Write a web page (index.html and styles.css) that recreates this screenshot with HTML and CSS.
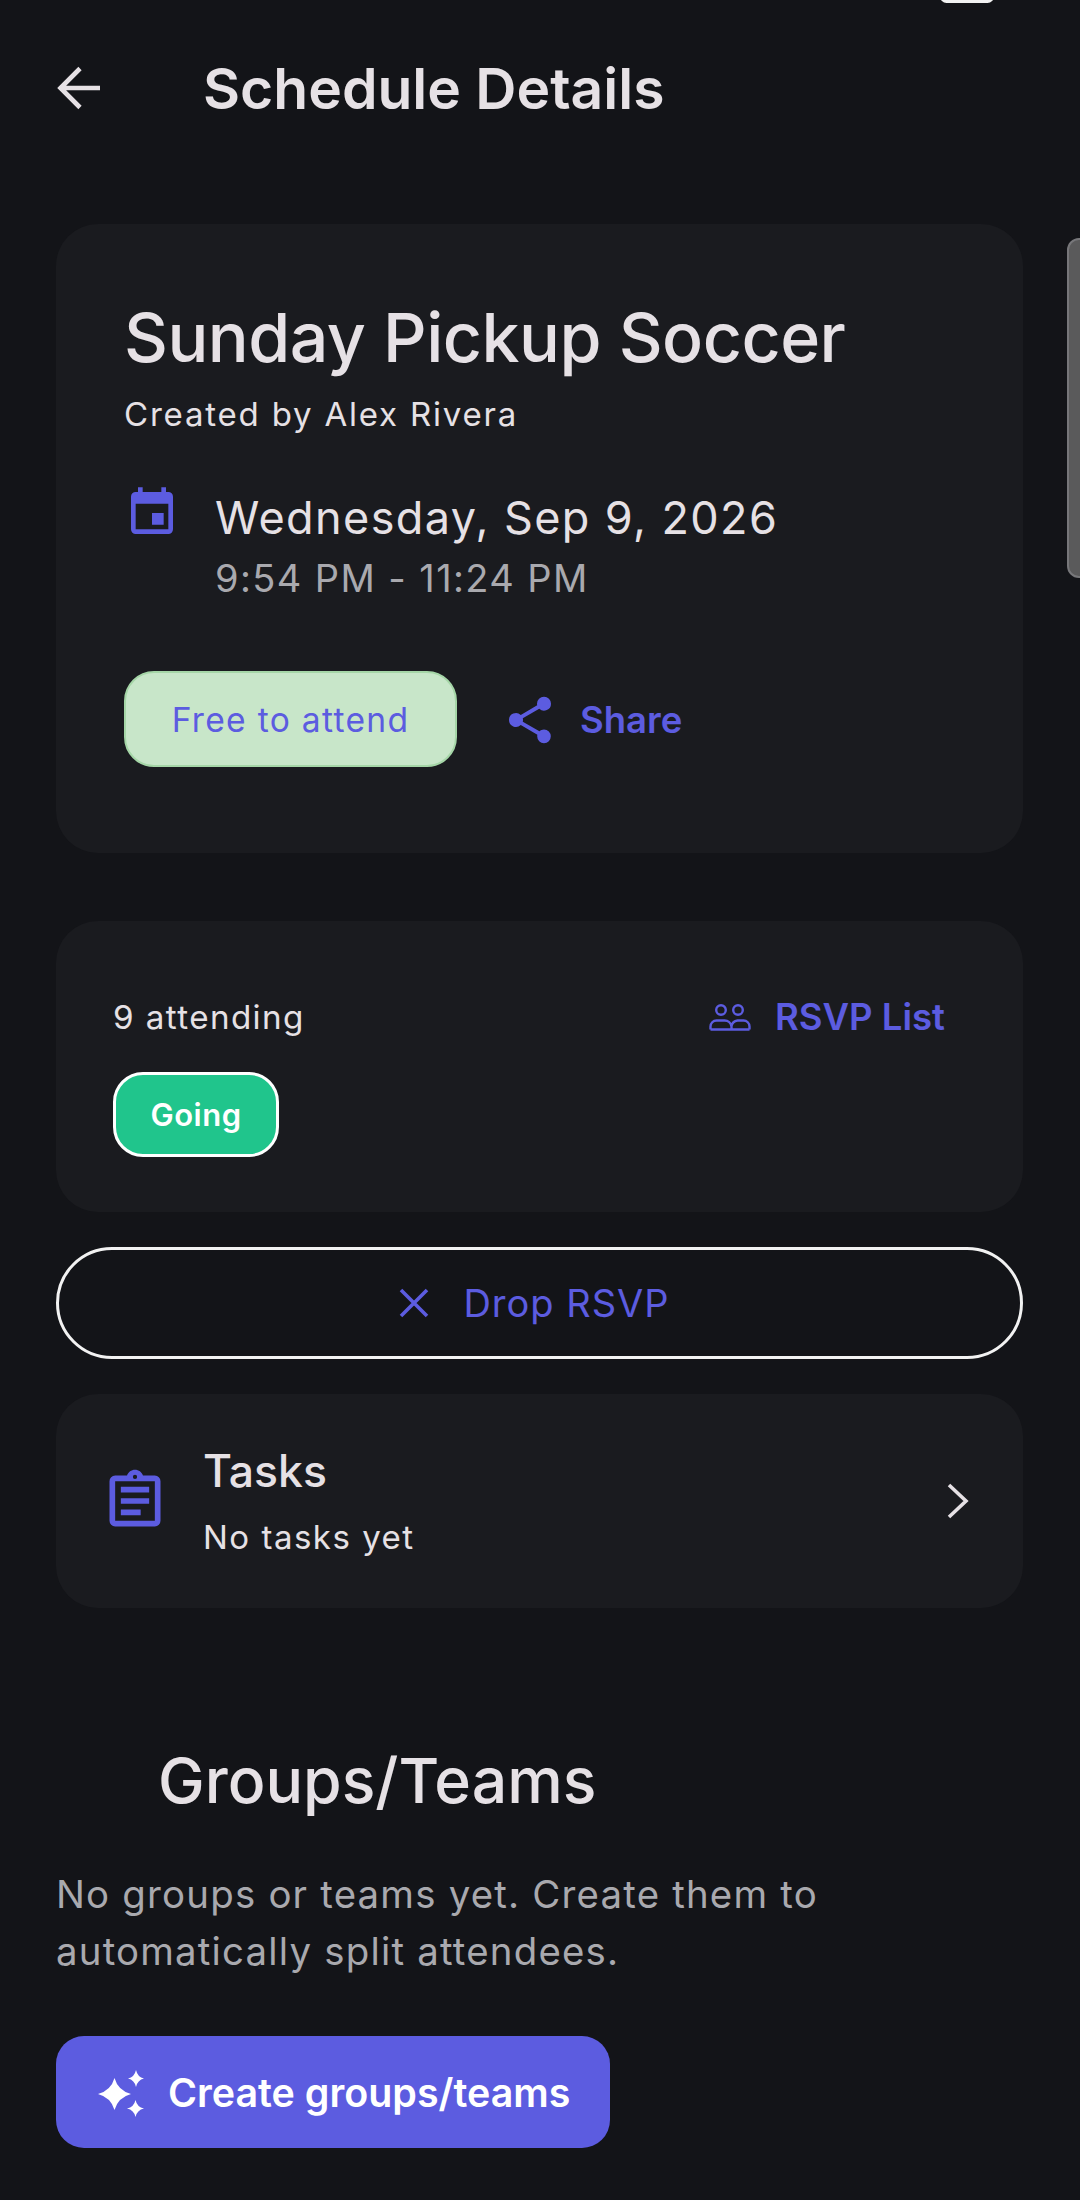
FILE: index.html
```html
<!doctype html>
<html>
<head>
<meta charset="utf-8">
<title>Schedule Details</title>
<link rel="stylesheet" href="styles.css">
</head>
<body>
<div class="status-pill"></div>
<div class="scrollbar"></div>

<div class="page">
	<div class="topbar">
		<svg class="back-icon" viewBox="0 0 48 48"><path d="M44 24H6M24 4.500 4.500 24 24 43.500" fill="none" stroke="#e6e1e5" stroke-width="4.6"/></svg>
		<h1 class="topbar-title">Schedule Details</h1>
	</div>

	<div class="card event-card">
		<h2 class="event-title">Sunday Pickup Soccer</h2>
		<div class="event-author">Created by Alex Rivera</div>
		<div class="event-when">
			<svg class="calendar-icon" viewBox="0 0 24 24"><path d="M19 3h-1V1h-2v2H8V1H6v2H5a2 2 0 0 0-2 2v14a2 2 0 0 0 2 2h14a2 2 0 0 0 2-2V5a2 2 0 0 0-2-2zm0 16H5V8h14v11zm-7-7h5v5h-5v-5z" fill="#5c5ce0"/></svg>
			<div>
				<div class="event-date">Wednesday, Sep 9, 2026</div>
				<div class="event-time">9:54 PM - 11:24 PM</div>
			</div>
		</div>
		<div class="event-actions">
			<div class="free-chip">Free to attend</div>
			<div class="share">
				<svg class="share-icon" viewBox="0 0 24 24"><path d="M18 16.080c-.76 0-1.44.3-1.96.77L8.910 12.700c.05-.23.09-.46.09-.7s-.04-.47-.09-.7l7.050-4.110A2.990 2.990 0 0 0 21 5a3 3 0 0 0-6 0c0 .24.04.47.09.7L8.040 9.810A2.990 2.990 0 0 0 3 12a2.990 2.990 0 0 0 5.040 2.190l7.120 4.160c-.05.21-.08.43-.08.65a2.920 2.920 0 1 0 2.920-2.920z" fill="#5c5ce0"/></svg>
				<span>Share</span>
			</div>
		</div>
	</div>

	<div class="card rsvp-card">
		<div class="rsvp-row">
			<span class="attending">9 attending</span>
			<div class="rsvp-link">
				<svg class="people-icon" viewBox="0 0 42 27"><g fill="none" stroke="#5c5ce0" stroke-width="2.4"><circle cx="12" cy="6" r="4.800"/><circle cx="29" cy="6" r="4.800"/><path d="M1.500 25.500v-3a6 6 0 0 1 6-6h8a7 7 0 0 1 7 6v3M22.500 22a7 7 0 0 1 6-5.500h6a6 6 0 0 1 6 6v3M1.500 25.500h39"/></g></svg>
				<span>RSVP List</span>
			</div>
		</div>
		<div class="going-chip">Going</div>
	</div>

	<div class="drop-btn">
		<svg class="close-icon" viewBox="0 0 32 32"><path d="M3 3l26 26M29 3 3 29" stroke="#5c5ce0" stroke-width="3.6" fill="none"/></svg>
		<span>Drop RSVP</span>
	</div>

	<div class="card tasks-card">
		<svg class="task-icon" viewBox="0 0 24 24"><path d="M19 3h-4.180C14.400 1.840 13.300 1 12 1s-2.400.84-2.820 2H5a2 2 0 0 0-2 2v14a2 2 0 0 0 2 2h14a2 2 0 0 0 2-2V5a2 2 0 0 0-2-2zm-7-.25a.75.75 0 1 1 0 1.500.75.75 0 0 1 0-1.500zM19 19H5V5h14v14zM7 7h10v2H7V7zm0 4h10v2H7v-2zm0 4h7v2H7v-2z" fill="#5c5ce0"/></svg>
		<div class="tasks-text">
			<div class="tasks-title">Tasks</div>
			<div class="tasks-sub">No tasks yet</div>
		</div>
		<svg class="chevron-icon" viewBox="0 0 24 38"><path d="M3 3l17 16L3 35" fill="none" stroke="#e6e1e5" stroke-width="3.6"/></svg>
	</div>

	<h2 class="groups-title">Groups/Teams</h2>
	<p class="groups-text">No groups or teams yet. Create them to automatically split attendees.</p>

	<div class="create-btn">
		<svg class="spark-icon" viewBox="0 0 46 47"><path d="M16.500 8Q20 20.500 33 24 20 27.500 16.500 40 13 27.500 0 24 13 20.500 16.500 8zM38 0Q39.500 7 46 8.500 39.500 10 38 17 36.500 10 30 8.500 36.500 7 38 0zM37.500 30Q39 37 46 38.500 39 40 37.500 47 36 40 29 38.500 36 37 37.500 30z" fill="#fff"/></svg>
		<span>Create groups/teams</span>
	</div>
</div>
</body>
</html>
```
FILE: styles.css
```css
html, body {
	margin: 0;
	height: 2200px;
	overflow: hidden;
	background: #131418;
}
body {
	position: relative;
	font-family: "Inter", "Liberation Sans", sans-serif;
	color: #e6e1e5;
}
.status-pill {
	position: absolute;
	top: -10px;
	left: 940px;
	width: 54px;
	height: 13px;
	border-radius: 8px;
	background: #f2f2f2;
}
.scrollbar {
	position: absolute;
	top: 238px;
	left: 1067px;
	width: 30px;
	height: 340px;
	box-sizing: border-box;
	border: 2px solid #77777a;
	border-radius: 12px;
	background: #5a5a5b;
}
.page {
	width: 967px;
	margin-left: 56px;
}

.topbar {
	display: flex;
	align-items: center;
	height: 176px;
}
.back-icon {
	width: 48px;
	height: 48px;
}
.topbar-title {
	margin: 0 0 0 99px;
	font-size: 57px;
	font-weight: 600;
	color: #e6e1e5;
}

.card {
	background: #1a1b1f;
	border-radius: 42px;
}
.event-card {
	box-sizing: border-box;
	height: 629px;
	margin-top: 48px;
	padding: 73px 68px 0;
}
.event-title {
	margin: 0;
	font-size: 68px;
	line-height: 80px;
	font-weight: 500;
	letter-spacing: -0.5px;
}
.event-author {
	margin-top: 15px;
	font-size: 33px;
	line-height: 44px;
	letter-spacing: 1.8px;
}
.event-when {
	display: flex;
	margin-top: 52px;
}
.calendar-icon {
	width: 56px;
	height: 56px;
	margin: -3px 0 0 0;
}
.event-date {
	margin-left: 35px;
	font-size: 45px;
	line-height: 60px;
	letter-spacing: 1.4px;
}
.event-time {
	margin-left: 35px;
	font-size: 38px;
	line-height: 60px;
	letter-spacing: 1.4px;
	color: #a9a9ae;
}
.event-actions {
	display: flex;
	align-items: center;
	margin-top: 63px;
}
.free-chip {
	display: flex;
	align-items: center;
	justify-content: center;
	box-sizing: border-box;
	width: 333px;
	height: 96px;
	border: 2px solid #a5d6a7;
	border-radius: 30px;
	background: #c8e6c9;
	color: #5c5ce0;
	font-size: 33.600px;
	letter-spacing: 1.3px;
}
.share {
	display: flex;
	align-items: center;
	margin: 2px 0 0 45px;
	color: #5c5ce0;
	font-size: 36.500px;
	font-weight: 600;
}
.share-icon {
	width: 56px;
	height: 56px;
	margin-right: 22px;
}

.rsvp-card {
	box-sizing: border-box;
	height: 291px;
	margin-top: 68px;
	padding: 72px 78px 0 57px;
}
.rsvp-row {
	display: flex;
	align-items: center;
	justify-content: space-between;
	height: 48px;
}
.attending {
	font-size: 33.200px;
	letter-spacing: 1.4px;
}
.rsvp-link {
	display: flex;
	align-items: center;
	color: #5c5ce0;
	font-size: 36.500px;
	font-weight: 600;
}
.people-icon {
	width: 42px;
	height: 27px;
	margin-right: 24px;
}
.going-chip {
	display: flex;
	align-items: center;
	justify-content: center;
	box-sizing: border-box;
	width: 166px;
	height: 85px;
	margin-top: 31px;
	border: 3px solid #fff;
	border-radius: 30px;
	background: #20c58c;
	color: #fff;
	font-size: 31px;
	font-weight: 600;
	letter-spacing: 0.5px;
}

.drop-btn {
	display: flex;
	align-items: center;
	justify-content: center;
	box-sizing: border-box;
	height: 112px;
	margin-top: 35px;
	padding-right: 11px;
	border: 3px solid #f2f2f2;
	border-radius: 56px;
	color: #5c5ce0;
	font-size: 38px;
	letter-spacing: 1px;
}
.close-icon {
	width: 32px;
	height: 32px;
	margin-right: 33px;
}

.tasks-card {
	display: flex;
	align-items: center;
	box-sizing: border-box;
	height: 214px;
	margin-top: 35px;
	padding: 0 53px 0 45px;
}
.task-icon {
	width: 68px;
	height: 68px;
}
.tasks-text {
	flex: 1;
	margin-left: 34px;
}
.tasks-title {
	font-size: 44.500px;
	line-height: 56px;
	font-weight: 500;
}
.tasks-sub {
	margin-top: 16px;
	font-size: 33px;
	line-height: 44px;
	letter-spacing: 1.5px;
}
.chevron-icon {
	width: 24px;
	height: 38px;
}

.groups-title {
	margin: 136px 0 0 102px;
	font-size: 62.500px;
	line-height: 72px;
	font-weight: 500;
}
.groups-text {
	margin: 50px 0 0;
	width: 860px;
	font-size: 38.400px;
	line-height: 57px;
	letter-spacing: 1.2px;
	color: #a9a9ae;
}

.create-btn {
	display: flex;
	align-items: center;
	box-sizing: border-box;
	width: 554px;
	height: 112px;
	margin-top: 56px;
	padding: 2px 0 0 42px;
	border-radius: 28px;
	background: #5c5ce0;
	color: #fff;
	font-size: 39.400px;
	font-weight: 600;
}
.spark-icon {
	width: 46px;
	height: 47px;
	margin-right: 24px;
}
```
